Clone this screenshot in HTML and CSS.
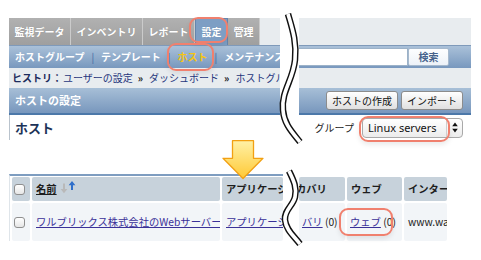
FILE: index.html
```html
<!DOCTYPE html>
<html lang="ja">
<head>
<meta charset="utf-8">
<link rel="stylesheet" href="styles.css">
</head>
<body>
<div class="page">
  <section class="shot shot-top">
    <div class="piece top-left">
      <nav class="tabs">
        <span class="tab">監視データ</span>
        <span class="tab">インベントリ</span>
        <span class="tab">レポート</span>
        <span class="tab active mark">設定</span>
        <span class="tab">管理</span>
      </nav>
      <div class="subnav">
        <span class="sub">ホストグループ</span><span class="sep">|</span><span class="sub">テンプレート</span><span class="sep">|</span><span class="sub current mark">ホスト</span><span class="sep">|</span><span class="sub last">メンテナンス</span>
      </div>
      <div class="crumbs"><b>ヒストリ：</b><a class="crumb">ユーザーの設定</a><span class="raquo">»</span><a class="crumb">ダッシュボード</a><span class="raquo">»</span><a class="crumb">ホストグループ</a></div>
      <div class="hdr"><span class="hdr-title">ホストの設定</span></div>
      <div class="content"><h1 class="title">ホスト</h1></div>
    </div>
    <div class="piece top-right">
      <div class="tabs tabs-empty"></div>
      <div class="subnav search">
        <span class="input"></span><span class="search-btn">検索</span>
      </div>
      <div class="crumbs"></div>
      <div class="hdr actions"><span class="btn">ホストの作成</span><span class="btn">インポート</span></div>
      <div class="content filter">
        <span class="label">グループ</span>
        <span class="select mark">Linux servers<span class="updown"><svg width="6" height="11" viewBox="0 0 6 11"><path d="M3 0.5L5.8 4.3H0.2z M3 10.5L5.8 6.7H0.2z" fill="#111"/></svg></span></span>
      </div>
    </div>
  </section>

  <div class="arrow-row">
    <svg class="down-arrow" width="42" height="40" viewBox="0 0 42 40">
      <defs>
        <linearGradient id="ag" x1="0" y1="0" x2="0" y2="1">
          <stop offset="0" stop-color="#fff1a6"/>
          <stop offset="1" stop-color="#ffc935"/>
        </linearGradient>
      </defs>
      <path d="M10.5 0.7H31.5V18.3H41L21 38.5L1 18.3H10.5Z" fill="url(#ag)" stroke="#f2a012" stroke-width="1.3" stroke-linejoin="round"/>
    </svg>
  </div>

  <section class="shot shot-bottom">
    <div class="piece bottom-left">
      <div class="grid grid-left">
        <div class="cell th center"><span class="cb"></span></div>
        <div class="cell th"><span class="sortable">名前</span><svg class="sort" width="16" height="14" viewBox="0 0 16 14"><path d="M3 3.5V9H0.6L4 13.2L7.4 9H5V3.5z" fill="#b9b9b9"/><path d="M11 10V5.2H8.6L12 1L15.4 5.2H13V10z" fill="#2f6fca"/></svg></div>
        <div class="cell th">アプリケーション</div>
        <div class="cell td center"><span class="cb"></span></div>
        <div class="cell td"><a class="link">ワルブリックス株式会社のWebサーバー</a></div>
        <div class="cell td"><a class="link">アプリケーション</a></div>
      </div>
    </div>
    <div class="piece bottom-right">
      <div class="grid grid-right">
        <div class="cell th cut">カバリ</div>
        <div class="cell th">ウェブ</div>
        <div class="cell th">インターフェース</div>
        <div class="cell td tail"><a class="link">バリ</a>&nbsp;(0)</div>
        <div class="cell td open"><a class="link mark web">ウェブ</a>&nbsp;(0)</div>
        <div class="cell td">www.walbrix.co.jp</div>
      </div>
    </div>
  </section>

  <svg class="breaks" width="481" height="260" viewBox="0 0 481 260">
    <g fill="none" stroke-linecap="butt">
      <path d="M288 14 C292 28 297 42 295 60 C293 80 281 92 283 110 C284 124 292 132 300 142" stroke="#111" stroke-width="6.5"/>
      <path d="M288 14 C292 28 297 42 295 60 C293 80 281 92 283 110 C284 124 292 132 300 142" stroke="#fff" stroke-width="3.6"/>
      <path d="M289 171 C294 181 297 188 295 197 C293 206 284 210 285 220 C286 230 294 236 300 244" stroke="#111" stroke-width="6.5"/>
      <path d="M289 171 C294 181 297 188 295 197 C293 206 284 210 285 220 C286 230 294 236 300 244" stroke="#fff" stroke-width="3.6"/>
    </g>
  </svg>
</div>
</body>
</html>
```

FILE: styles.css
```css
* { box-sizing: border-box; margin: 0; padding: 0; }

html, body { background: #fff; }

body {
  margin: 0;
  font-family: "Noto Sans CJK JP", "Noto Sans", sans-serif;
  font-size: 10px;
  line-height: 1.2;
  color: #222;
}

.page {
  position: relative;
  width: 481px;
  height: 260px;
  padding: 18px 0 0 9px;
  overflow: hidden;
}

.shot { display: flex; }
.shot-top { gap: 19px; }
.shot-bottom { gap: 16px; }

.piece { display: flex; flex-direction: column; }
.top-left { width: 271px; }
.top-right { width: 172px; }
.bottom-left { width: 274px; }
.bottom-right { width: 148px; }

/* ---------- top tabs ---------- */
.tabs {
  height: 27px;
  display: flex;
  background: #e8ecef;
}
.tab {
  display: flex;
  align-items: center;
  padding: 0 5.5px;
  background: linear-gradient(#b1b1b1, #9f9f9f);
  color: #fff;
  font-weight: bold;
  border-right: 1px solid #cbcbcb;
  white-space: nowrap;
  text-shadow: 0 0 1px rgba(0,0,0,.15);
}
.tab.active {
  background: #7d9ec4;
  border: 1px solid #6585ad;
  border-bottom: none;
}

/* ---------- sub navigation ---------- */
.subnav {
  height: 23px;
  display: flex;
  align-items: stretch;
  background: linear-gradient(#aac1d9, #7898be);
  border-top: 1px solid #7f9aba;
  padding-left: 6px;
  color: #fff;
  font-weight: bold;
}
.sub {
  display: flex;
  align-items: center;
  white-space: nowrap;
}
.sub.current { color: #f6c512; }
.sub.last { flex: 1 1 0; min-width: 0; overflow: hidden; }
.sep {
  display: flex;
  align-items: center;
  margin: 0 7px;
  color: #3c64a2;
  font-weight: normal;
}

/* ---------- breadcrumbs ---------- */
.crumbs {
  height: 20px;
  display: flex;
  align-items: center;
  padding-left: 3px;
  background: #e8ecef;
  white-space: nowrap;
  overflow: hidden;
  color: #1c2b5c;
}
.crumbs b { font-weight: bold; }
.crumb { color: #26367c; margin-left: 1px; }
.raquo { margin: 0 5px; color: #111; font-weight: bold; }

/* ---------- section header ---------- */
.hdr {
  height: 27px;
  display: flex;
  align-items: center;
  padding: 0 0 2px 6px;
  background: linear-gradient(#a7bfd7 0%, #7897bd 92%, #4c78a9 92%, #4c78a9 100%);
  color: #fff;
  font-weight: bold;
}
.hdr-title { font-size: 11px; }

.content {
  height: 25px;
  display: flex;
  align-items: center;
  background: #fff;
}
.top-left .content {
  border-left: 1px solid #b9c3cd;
  padding-left: 5px;
}
.title {
  font-size: 13px;
  font-weight: bold;
  color: #1c3358;
}

/* ---------- right top piece ---------- */
.search { padding-left: 0; align-items: center; }
.input {
  width: 109px;
  height: 18px;
  background: #fff;
  border: 1px solid #9cb2c8;
  border-left: none;
}
.search-btn {
  width: 41px;
  height: 18px;
  display: flex;
  align-items: center;
  justify-content: center;
  background: linear-gradient(#fdfeff, #edf2f8);
  border: 1px solid #a6b9cd;
  border-radius: 2px;
  color: #47638c;
  font-weight: bold;
}

.actions {
  justify-content: flex-end;
  gap: 3px;
  padding: 0 8px 2px 0;
}
.btn {
  height: 19px;
  display: flex;
  align-items: center;
  padding: 0 5px;
  background: linear-gradient(#ffffff, #e0e0e0);
  border: 1px solid #8c8c8c;
  border-radius: 3px;
  color: #111;
  font-weight: normal;
  white-space: nowrap;
}

.filter {
  justify-content: flex-end;
  gap: 8px;
  padding-right: 8px;
}
.label { color: #222; }
.select {
  width: 101px;
  height: 20px;
  display: flex;
  align-items: center;
  padding-left: 5px;
  font-family: "Noto Sans", "DejaVu Sans", sans-serif;
  font-size: 11px;
  color: #111;
  background: linear-gradient(#ffffff, #ececec);
  border: 1px solid #a9a9a9;
  border-radius: 4px;
}
.updown {
  margin-left: auto;
  width: 16px;
  height: 100%;
  display: flex;
  align-items: center;
  justify-content: center;
  border-left: 1px solid #cfcfcf;
}
.updown svg { display: block; }

/* ---------- arrow ---------- */
.arrow-row { height: 34px; }
.down-arrow {
  display: block;
  margin-left: 213px;
  position: relative;
  z-index: 2;
}

/* ---------- bottom table ---------- */
.bottom-left {
  border-top: 2px solid #7e9dc0;
  border-left: 1px solid #dfe5ea;
  padding: 1px 0 0 2px;
}
.bottom-right { padding-top: 3px; }

.grid {
  display: grid;
  grid-template-rows: 24px 38px;
  gap: 2px;
}
.grid-left { grid-template-columns: 18px 188px 61px; }
.grid-right { grid-template-columns: 46px 55px 43px; }

.cell {
  display: flex;
  align-items: center;
  padding-left: 4px;
  overflow: hidden;
  white-space: nowrap;
  border-radius: 2px;
  font-size: 10.3px;
}
.cell.open { overflow: visible; padding-left: 3px; }
.cell.center { justify-content: center; padding: 0; }
.cell.cut { padding-left: 0; text-indent: -3px; }
.cell.tail { padding-left: 3px; }
.th {
  background: #c7d2db;
  font-weight: bold;
  color: #1d1d1d;
}
.td {
  background: #f2f5f8;
  color: #222;
}
.sortable { text-decoration: underline; }
.sort { display: block; margin-left: 3px; margin-top: -4px; }

.cb {
  width: 11px;
  height: 11px;
  border: 1px solid #8f8f8f;
  border-radius: 3px;
  background: linear-gradient(#ffffff, #e6e6e6);
  margin-left: -3px;
}

.link {
  color: #3a3198;
  text-decoration: underline;
}
.web {
  display: inline-block;
  line-height: 14px;
}

/* ---------- highlight marks ---------- */
.mark { position: relative; }
.mark::after {
  content: "";
  position: absolute;
  border: 2px solid #f0806e;
  border-radius: 9px;
  box-shadow: 0 3px 5px rgba(0,0,0,.08);
  pointer-events: none;
}
.tab.mark::after { left: -7px; right: -1px; top: -2px; bottom: 2px; }
.sub.mark::after { left: -11px; right: -6px; top: -3px; bottom: -3px; }
.select.mark::after { left: -4px; right: 12px; top: -3px; bottom: -5px; }
.web.mark::after { left: -11px; right: -12px; top: -7px; bottom: -7px; }

/* ---------- break lines ---------- */
.breaks {
  position: absolute;
  left: 0;
  top: 0;
  z-index: 3;
  pointer-events: none;
}
```
